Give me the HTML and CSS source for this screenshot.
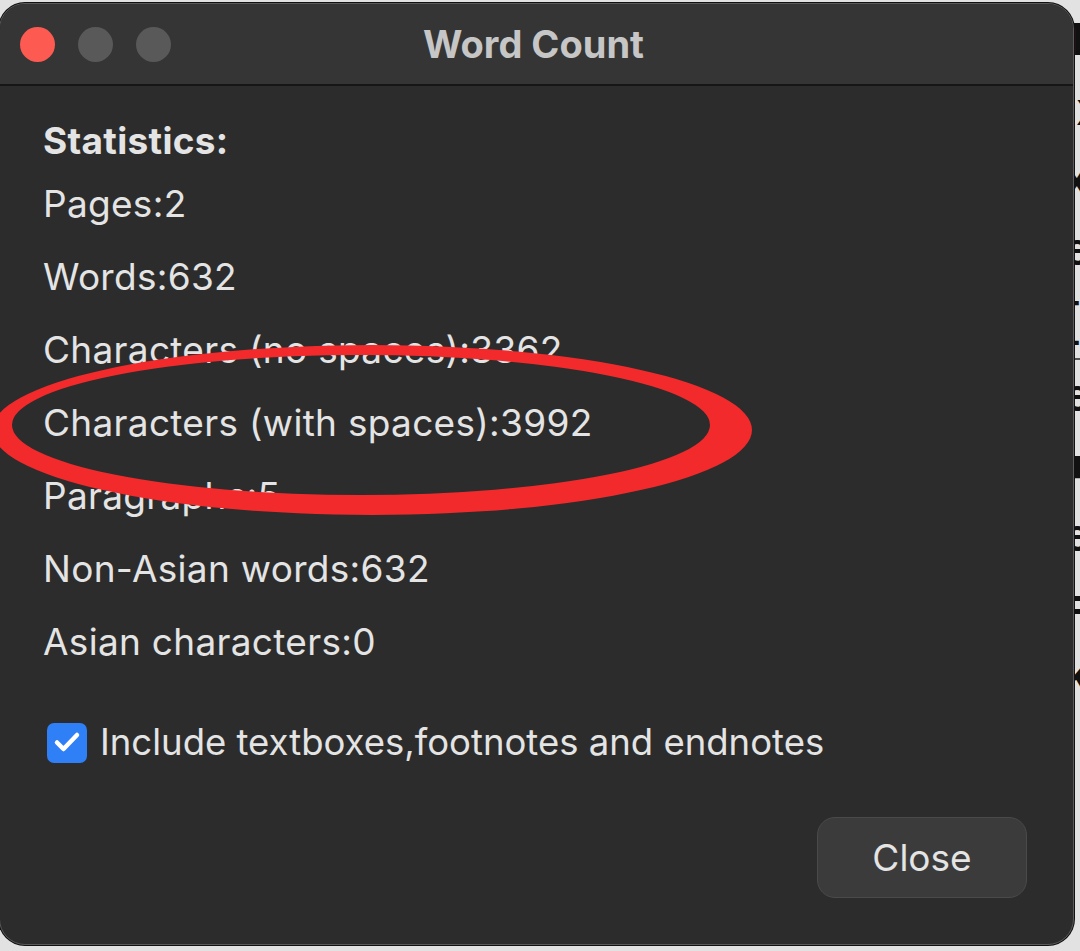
FILE: index.html
```html
<!DOCTYPE html>
<html lang="en">
  <head>
    <meta charset="UTF-8" />
    <meta name="viewport" content="width=device-width, initial-scale=1.0" />
    <title>Word Count</title>
    <link rel="stylesheet" href="styles.css">
  </head>
  <body>
    <!-- document behind the dialog, only its edge shows -->
    <div class="doc">
      <p>Tk</p>
      <p>Ix</p>
      <p>xe</p>
      <p>e</p>
      <p>[l</p>
      <hr />
      <p>e</p>
      <p>■</p>
      <p>e</p>
      <p>=</p>
      <p>k</p>
    </div>

    <div class="dialog">
      <div class="titlebar">
        <div class="lights">
          <span class="light red"></span>
          <span class="light"></span>
          <span class="light"></span>
        </div>
        <div class="title">Word Count</div>
        <div></div>
      </div>

      <div class="stats">
        <div class="stats-title">Statistics:</div>
        <div class="stat">Pages:2</div>
        <div class="stat">Words:632</div>
        <div class="stat">Characters (no spaces):3362</div>
        <div class="stat">Characters (with spaces):3992</div>
        <div class="stat">Paragraphs:5</div>
        <div class="stat">Non-Asian words:632</div>
        <div class="stat">Asian characters:0</div>

        <label class="option">
          <span class="checkbox">
            <svg viewBox="0 0 40 40" width="40" height="40">
              <path d="M10 19.5 L16.5 26 L30 12" />
            </svg>
          </span>
          Include textboxes,footnotes and endnotes
        </label>
      </div>

      <div class="footer">
        <button class="btn">Close</button>
      </div>
    </div>

    <!-- red marker drawn over the screenshot -->
    <svg class="marker" viewBox="0 0 1080 951" width="1080" height="951">
      <path
        fill-rule="evenodd"
        d="M -8 430 a 380 85 0 1 0 760 0 a 380 85 0 1 0 -760 0 Z
           M 12 425 a 349 70 0 1 0 698 0 a 349 70 0 1 0 -698 0 Z"
      />
    </svg>
  </body>
</html>
```

FILE: styles.css
```css
body {
  position: relative;
  width: 1080px;
  height: 951px;
  margin: 0;
  overflow: hidden;
  background-color: #e2e2e2;
  font-family: "Inter", "Liberation Sans", sans-serif;
}
.doc {
  position: absolute;
  top: 8px;
  left: 1064px;
  width: 300px;
  color: #111;
  font-family: "Liberation Sans", sans-serif;
  font-size: 46px;
  font-weight: 700;
  line-height: 62px;
}
.doc p {
  margin: 0 0 8px;
}
.doc hr {
  margin: 4px 0;
  border: 0;
  border-top: 2px solid #555;
}
.dialog {
  position: absolute;
  top: 3px;
  left: -1px;
  width: 1075px;
  height: 942px;
  box-sizing: border-box;
  display: flex;
  flex-direction: column;
  background-color: #2c2c2c;
  border: 1px solid #5a5a5a;
  border-radius: 26px;
  box-shadow: 0 0 0 1px #111;
  overflow: hidden;
}
.titlebar {
  display: grid;
  grid-template-columns: 1fr auto 1fr;
  align-items: center;
  height: 80px;
  padding-right: 6px;
  background-color: #353535;
  border-bottom: 2px solid #161616;
}
.lights {
  display: flex;
  gap: 23px;
  padding-left: 20px;
}
.light {
  width: 35px;
  height: 35px;
  border-radius: 50%;
  background-color: #595959;
}
.light.red {
  background-color: #fd5a52;
}
.title {
  color: #c6c6c6;
  font-size: 38px;
  font-weight: 700;
}
.stats {
  padding: 28px 0 0 43px;
  color: #e4e4e4;
  font-size: 37px;
}
.stats-title {
  font-weight: 700;
  line-height: 53px;
  letter-spacing: 0.3px;
}
.stat {
  line-height: 73px;
  letter-spacing: 0.3px;
}
.option {
  display: flex;
  align-items: center;
  gap: 13px;
  margin-top: 28px;
  font-size: 36.5px;
  line-height: 73px;
}
.checkbox {
  display: flex;
  width: 40px;
  height: 40px;
  margin-left: 4px;
  border-radius: 7px;
  background-color: #2f7ff6;
}
.checkbox path {
  fill: none;
  stroke: #fff;
  stroke-width: 4.5;
  stroke-linecap: round;
  stroke-linejoin: round;
}
.footer {
  display: flex;
  justify-content: flex-end;
  margin-top: auto;
  padding: 0 46px 46px 0;
}
.btn {
  width: 210px;
  height: 81px;
  background-color: #3b3b3b;
  border: 1px solid #4a4a4a;
  border-radius: 18px;
  color: #e4e4e4;
  font-family: inherit;
  font-size: 37px;
}
.marker {
  position: absolute;
  top: 0;
  left: 0;
  pointer-events: none;
}
.marker path {
  fill: #f22a2b;
}
```
